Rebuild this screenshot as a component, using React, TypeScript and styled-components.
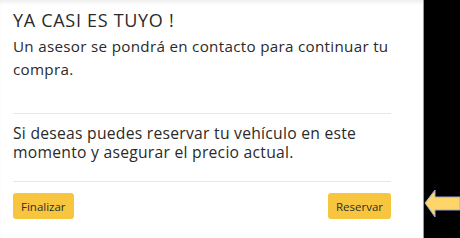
import React from "react";
import styled, { createGlobalStyle } from "styled-components";

const Global = createGlobalStyle`
  html, body { margin: 0; padding: 0; background: #000; }
  body { width: 460px; height: 238px; overflow: hidden; font-family: "Open Sans", "Noto Sans", sans-serif; }
`;

const Screen = styled.div`
  position: relative;
  display: flex;
  width: 460px;
  height: 238px;
  background: #000;
`;

const Panel = styled.div`
  width: 424px;
  height: 238px;
  background: #fff;
  border-right: 1px solid #9a9a9a;
  box-shadow: inset 0 4px 4px -2px rgba(0, 0, 0, 0.08);
  padding: 9px 32px 0 13px;
  box-sizing: border-box;
  display: flex;
  flex-direction: column;
  color: #2a2a2a;
`;

const Title = styled.h1`
  margin: 0;
  font-size: 18px;
  font-weight: 400;
  line-height: 22px;
  letter-spacing: 0.7px;
`;

const Text = styled.p<{ $size: number; $lh: number; $top: number; $ls: number }>`
  margin: ${(p) => p.$top}px 0 0;
  font-size: ${(p) => p.$size}px;
  line-height: ${(p) => p.$lh}px;
  letter-spacing: ${(p) => p.$ls}px;
`;

const Divider = styled.hr<{ $top: number; $bottom: number }>`
  border: 0;
  border-top: 1px solid #e6e6e6;
  margin: ${(p) => p.$top}px 0 ${(p) => p.$bottom}px;
`;

const Actions = styled.div`
  display: flex;
  justify-content: space-between;
`;

const Button = styled.button`
  height: 26px;
  padding: 0 8px;
  border: 0;
  border-radius: 3px;
  background: #f8c53e;
  color: #2e2e2e;
  font-family: "Open Sans", "Noto Sans", sans-serif;
  font-size: 11.5px;
`;

const Arrow = styled.svg`
  position: absolute;
  left: 424px;
  top: 188px;
`;

export default function App() {
  return (
    <>
      <Global />
      <Screen>
        <Panel>
          <Title>YA CASI ES TUYO !</Title>
          <Text $size={15.2} $lh={23} $top={4} $ls={0.3}>
            Un asesor se pondrá en contacto para continuar tu compra.
          </Text>
          <Divider $top={32} $bottom={10} />
          <Text $size={15.7} $lh={19} $top={0} $ls={0.25}>
            Si deseas puedes reservar tu vehículo en este momento y asegurar el precio actual.
          </Text>
          <Divider $top={19} $bottom={11} />
          <Actions>
            <Button>Finalizar</Button>
            <Button>Reservar</Button>
          </Actions>
        </Panel>
        <Arrow width="36" height="32" viewBox="0 0 36 32">
          <polygon
            points="1,15 11,2 11,9 36,9 36,22 11,22 11,29"
            fill="#fdd568"
            stroke="#9aa6d8"
            strokeWidth="1"
          />
        </Arrow>
      </Screen>
    </>
  );
}
